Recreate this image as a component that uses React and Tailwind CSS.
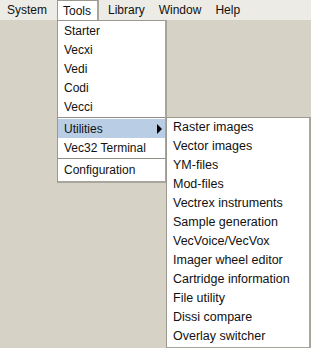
const tools = ['Starter', 'Vecxi', 'Vedi', 'Codi', 'Vecci']
const utilities = [
  'Raster images',
  'Vector images',
  'YM-files',
  'Mod-files',
  'Vectrex instruments',
  'Sample generation',
  'VecVoice/VecVox',
  'Imager wheel editor',
  'Cartridge information',
  'File utility',
  'Dissi compare',
  'Overlay switcher',
]

function Item({ label, active, arrow }) {
  return (
    <div className={`h-[19px] flex items-center justify-between pl-[6px] pr-[3px] ${active ? 'bg-[#b9cde5]' : ''}`}>
      <span>{label}</span>
      {arrow && <span className="w-0 h-0 border-y-[5px] border-y-transparent border-l-[5px] border-l-black" />}
    </div>
  )
}

export default function App() {
  return (
    <div className="relative w-[311px] h-[348px] bg-[#d6d3c6] text-[12px] text-[#111] overflow-hidden" style={{ fontFamily: '"Liberation Sans", Arial, sans-serif' }}>
      {/* menu bar */}
      <div className="h-[20px] bg-[#ecebe5] flex items-stretch">
        <div className="pl-[7px] pr-[10px] flex items-center">System</div>
        <div className="w-[42px] bg-white border-l border-t border-r-2 border-[#9c9a90] border-r-[#a8a69c] flex items-center pl-[5px]">Tools</div>
        <div className="pl-[9px] pr-[10px] flex items-center">Library</div>
        <div className="pl-[4px] pr-[14px] flex items-center">Window</div>
        <div className="flex items-center">Help</div>
      </div>

      {/* Tools dropdown */}
      <div className="absolute left-[57px] top-[20px] w-[110px] bg-white border border-[#9c9a90] border-r-2 border-b-2 border-r-[#a8a69c] border-b-[#a8a69c] pb-[2px]">
        {tools.map(t => <Item key={t} label={t} />)}
        <div className="h-px bg-[#8f8d85] my-[1px]" />
        <Item label="Utilities" active arrow />
        <Item label="Vec32 Terminal" />
        <div className="h-px bg-[#8f8d85] my-[1px]" />
        <Item label="Configuration" />
      </div>

      {/* Utilities submenu */}
      <div className="absolute left-[166px] top-[117px] w-[145px] text-[12.5px] bg-white border border-[#9c9a90] border-r-2 border-b-2 border-r-[#a8a69c] border-b-[#a8a69c] pb-[1px]">
        {utilities.map(u => <Item key={u} label={u} />)}
      </div>
    </div>
  )
}
